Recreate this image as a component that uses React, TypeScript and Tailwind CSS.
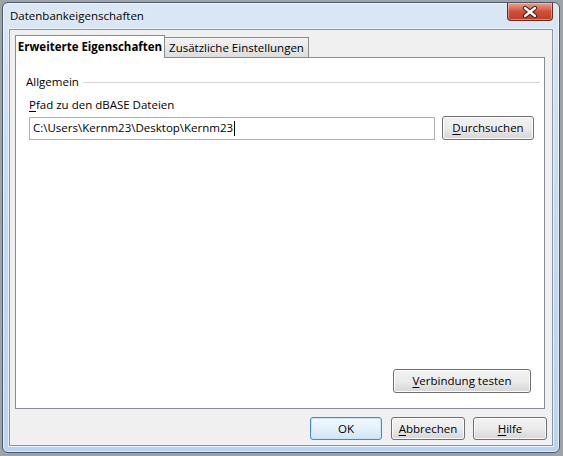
import type { ReactNode } from "react";

const font = "font-['Open_Sans',sans-serif] text-[11.5px] text-black";

function Mnemonic({ text }: { text: string }) {
  return (
    <>
      <span className="underline underline-offset-[2px]">{text[0]}</span>
      {text.slice(1)}
    </>
  );
}

function Button({
  children,
  className = "",
  isDefault = false,
}: {
  children: ReactNode;
  className?: string;
  isDefault?: boolean;
}) {
  return (
    <button
      className={
        "flex items-center justify-center rounded-[3px] border leading-[14px] " +
        (isDefault
          ? "border-[#3c8fcf] bg-gradient-to-b from-[#f2f9fe] via-[#e4f1fb] to-[#cfe5f5] shadow-[inset_0_0_0_1px_#c5e6fa] "
          : "border-[#707070] bg-gradient-to-b from-[#f3f3f3] via-[#ebebeb] to-[#d5d5d5] shadow-[inset_0_0_0_1px_#fcfcfc] ") +
        className
      }
    >
      {children}
    </button>
  );
}

function CloseButton() {
  return (
    <div className="flex h-[18px] w-[46px] items-center justify-center rounded-b-[4px] border border-t-0 border-[#6c2a22] bg-gradient-to-b from-[#eba191] via-[#cf4f38] to-[#c23a22] shadow-[inset_0_0_0_1px_rgba(255,220,210,0.45)]">
      <svg width="16" height="12" viewBox="0 0 16 12">
        <path d="M3 2 L13 10 M13 2 L3 10" stroke="#3b1711" strokeWidth="4.2" strokeLinecap="round" />
        <path d="M3 2 L13 10 M13 2 L3 10" stroke="#ffffff" strokeWidth="2.4" strokeLinecap="round" />
      </svg>
    </div>
  );
}

export default function App() {
  return (
    <div className={`h-[456px] w-[563px] bg-[#9ea3a9] pb-[3px] pl-[2px] pr-[3px] pt-[2px] ${font}`}>
      <div className="flex h-full w-full flex-col rounded-[6px] border border-[#4d5968] bg-gradient-to-b from-[#dbe7f4] via-[#c3daf1] to-[#b9d5f1] px-[6px] pb-[6px] shadow-[inset_0_0_0_1px_rgba(255,255,255,0.6)]">
        {/* title bar */}
        <div className="flex h-[26px] items-start justify-between">
          <span className="pl-[1px] pt-[6px] leading-[14px] [text-shadow:0_0_6px_rgba(255,255,255,0.95)]">
            Datenbankeigenschaften
          </span>
          <CloseButton />
        </div>

        {/* client area */}
        <div className="flex flex-1 flex-col border border-[#8b95a1] bg-[#f0f0f0] shadow-[0_0_0_1px_rgba(235,244,252,0.9)]">
          <div className="flex flex-1 flex-col pl-[5px] pr-[7px] pt-[5px]">
            {/* tabs */}
            <div className="relative z-10 -mb-px flex items-end">
              <div className="flex h-[23px] w-[150px] items-center justify-center border border-b-0 border-[#898c95] bg-white pb-[1px] font-bold">
                Erweiterte Eigenschaften
              </div>
              <div className="flex h-[21px] w-[144px] items-center justify-center border border-l-0 border-[#898c95] bg-gradient-to-b from-[#f3f3f3] to-[#dddddd]">
                Zusätzliche Einstellungen
              </div>
            </div>

            {/* tab page */}
            <div className="flex flex-1 flex-col border border-[#898c95] bg-white pb-[15px] pl-[10px] pr-[4px]">
              <div className="mt-[17px] flex items-center gap-[4px] leading-[14px]">
                <span>Allgemein</span>
                <div className="h-px flex-1 bg-[#d0d5da]" />
              </div>

              <div className="ml-[3px] mt-[9px] leading-[14px]">
                <Mnemonic text="Pfad zu den dBASE Dateien" />
              </div>

              <div className="ml-[3px] mt-[4px] flex items-center gap-[7px]">
                <div className="flex h-[23px] w-[406px] items-center border border-[#abadb3] bg-white pl-[3px]">
                  <span className="leading-[14px]">C:\Users\Kernm23\Desktop\Kernm23</span>
                  <span className="ml-[1px] h-[15px] w-px bg-black" />
                </div>
                <Button className="h-[24px] w-[92px]">
                  <Mnemonic text="Durchsuchen" />
                </Button>
              </div>

              <div className="flex-1" />

              <div className="flex justify-end pr-[9px]">
                <Button className="h-[24px] w-[138px]">
                  <Mnemonic text="Verbindung testen" />
                </Button>
              </div>
            </div>
          </div>

          {/* dialog buttons */}
          <div className="flex justify-end gap-[8px] pb-[5px] pr-[5px] pt-[8px]">
            <Button isDefault className="mr-[1px] h-[23px] w-[72px]">
              OK
            </Button>
            <Button className="h-[23px] w-[74px]">
              <Mnemonic text="Abbrechen" />
            </Button>
            <Button className="h-[23px] w-[74px]">
              <Mnemonic text="Hilfe" />
            </Button>
          </div>
        </div>
      </div>
    </div>
  );
}
